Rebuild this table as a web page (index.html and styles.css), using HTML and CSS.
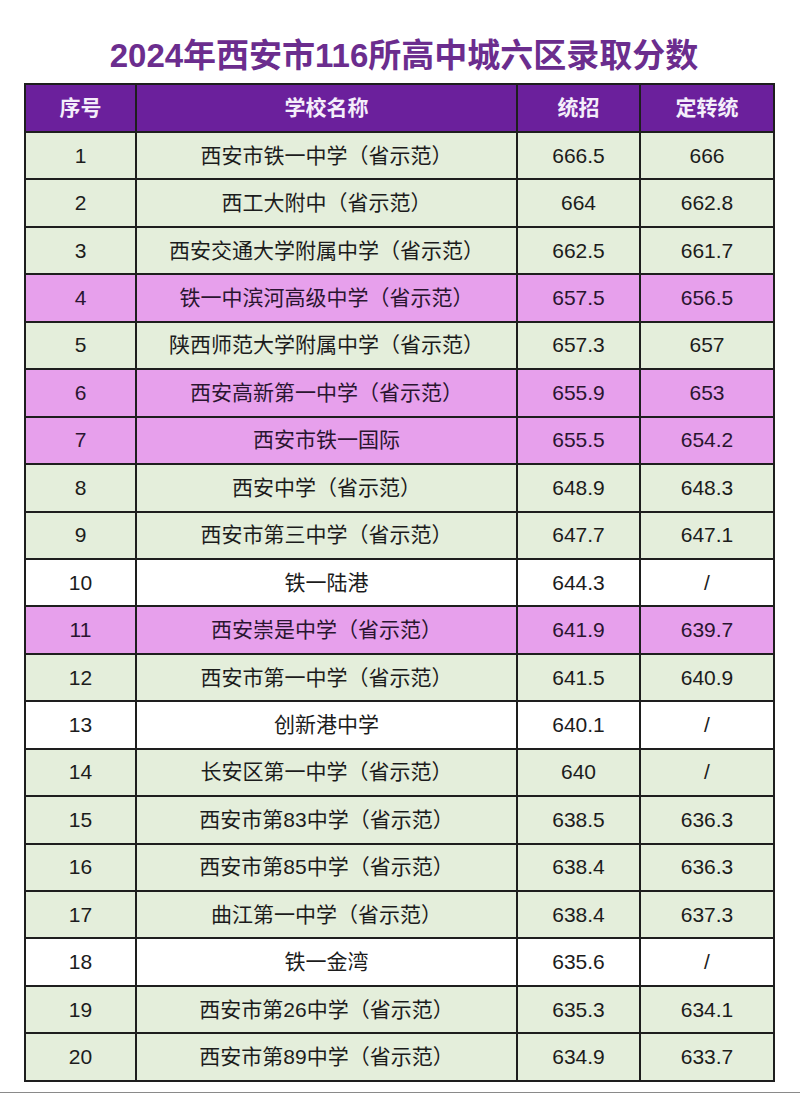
FILE: index.html
```html
<!DOCTYPE html>
<html lang="zh">
<head>
<meta charset="utf-8">
<title>2024年西安市116所高中城六区录取分数</title>
<link rel="stylesheet" href="styles.css">
</head>
<body>
<div class="page">
  <h1 class="title">2024年西安市116所高中城六区录取分数</h1>
  <table class="score-table">
    <colgroup>
      <col class="c-no">
      <col class="c-name">
      <col class="c-a">
      <col class="c-b">
    </colgroup>
    <thead>
      <tr><th>序号</th><th>学校名称</th><th>统招</th><th>定转统</th></tr>
    </thead>
    <tbody>
      <tr class="g"><td>1</td><td>西安市铁一中学（省示范）</td><td>666.5</td><td>666</td></tr>
      <tr class="g"><td>2</td><td>西工大附中（省示范）</td><td>664</td><td>662.8</td></tr>
      <tr class="g"><td>3</td><td>西安交通大学附属中学（省示范）</td><td>662.5</td><td>661.7</td></tr>
      <tr class="p"><td>4</td><td>铁一中滨河高级中学（省示范）</td><td>657.5</td><td>656.5</td></tr>
      <tr class="g"><td>5</td><td>陕西师范大学附属中学（省示范）</td><td>657.3</td><td>657</td></tr>
      <tr class="p"><td>6</td><td>西安高新第一中学（省示范）</td><td>655.9</td><td>653</td></tr>
      <tr class="p"><td>7</td><td>西安市铁一国际</td><td>655.5</td><td>654.2</td></tr>
      <tr class="g"><td>8</td><td>西安中学（省示范）</td><td>648.9</td><td>648.3</td></tr>
      <tr class="g"><td>9</td><td>西安市第三中学（省示范）</td><td>647.7</td><td>647.1</td></tr>
      <tr class="w"><td>10</td><td>铁一陆港</td><td>644.3</td><td>/</td></tr>
      <tr class="p"><td>11</td><td>西安崇是中学（省示范）</td><td>641.9</td><td>639.7</td></tr>
      <tr class="g"><td>12</td><td>西安市第一中学（省示范）</td><td>641.5</td><td>640.9</td></tr>
      <tr class="w"><td>13</td><td>创新港中学</td><td>640.1</td><td>/</td></tr>
      <tr class="g"><td>14</td><td>长安区第一中学（省示范）</td><td>640</td><td>/</td></tr>
      <tr class="g"><td>15</td><td>西安市第83中学（省示范）</td><td>638.5</td><td>636.3</td></tr>
      <tr class="g"><td>16</td><td>西安市第85中学（省示范）</td><td>638.4</td><td>636.3</td></tr>
      <tr class="g"><td>17</td><td>曲江第一中学（省示范）</td><td>638.4</td><td>637.3</td></tr>
      <tr class="w"><td>18</td><td>铁一金湾</td><td>635.6</td><td>/</td></tr>
      <tr class="g"><td>19</td><td>西安市第26中学（省示范）</td><td>635.3</td><td>634.1</td></tr>
      <tr class="g"><td>20</td><td>西安市第89中学（省示范）</td><td>634.9</td><td>633.7</td></tr>
    </tbody>
  </table>
  <div class="foot-line"></div>
</div>
</body>
</html>
```

FILE: styles.css
```css
html, body {
  margin: 0;
  padding: 0;
  background: #ffffff;
}

.page {
  width: 800px;
  height: 1094px;
  display: flex;
  flex-direction: column;
  align-items: center;
  font-family: "Liberation Sans", "Noto Sans CJK SC", sans-serif;
  color: #1c1c1c;
}

.title {
  margin: 0;
  padding: 38px 0 0 8px;
  height: 45px;
  font-size: 33px;
  line-height: 36px;
  font-weight: 700;
  color: #6b2d8e;
  letter-spacing: 0;
  text-align: center;
}

.score-table {
  margin-left: -1px;
  width: 749px;
  border-collapse: collapse;
  table-layout: fixed;
}

.c-no { width: 111px; }
.c-name { width: 381px; }
.c-a { width: 123px; }
.c-b { width: 134px; }

.score-table th,
.score-table td {
  border: 2px solid #1e1e1e;
  text-align: center;
  vertical-align: middle;
  padding: 0;
  font-size: 21px;
  line-height: 24px;
}

.score-table th {
  height: 46px;
  background: #6b209c;
  color: #f4eefa;
  font-weight: 700;
  font-size: 21px;
}

.score-table tbody tr {
  height: 47.45px;
}

.score-table tbody td {
  font-weight: 400;
}

.g td { background: #e4eedb; }
.p td { background: #e7a0ec; color: #2a1530; }
.w td { background: #ffffff; }

.foot-line {
  margin-top: auto;
  margin-bottom: 1px;
  width: 800px;
  height: 1px;
  background: #8a8a8a;
}
```
